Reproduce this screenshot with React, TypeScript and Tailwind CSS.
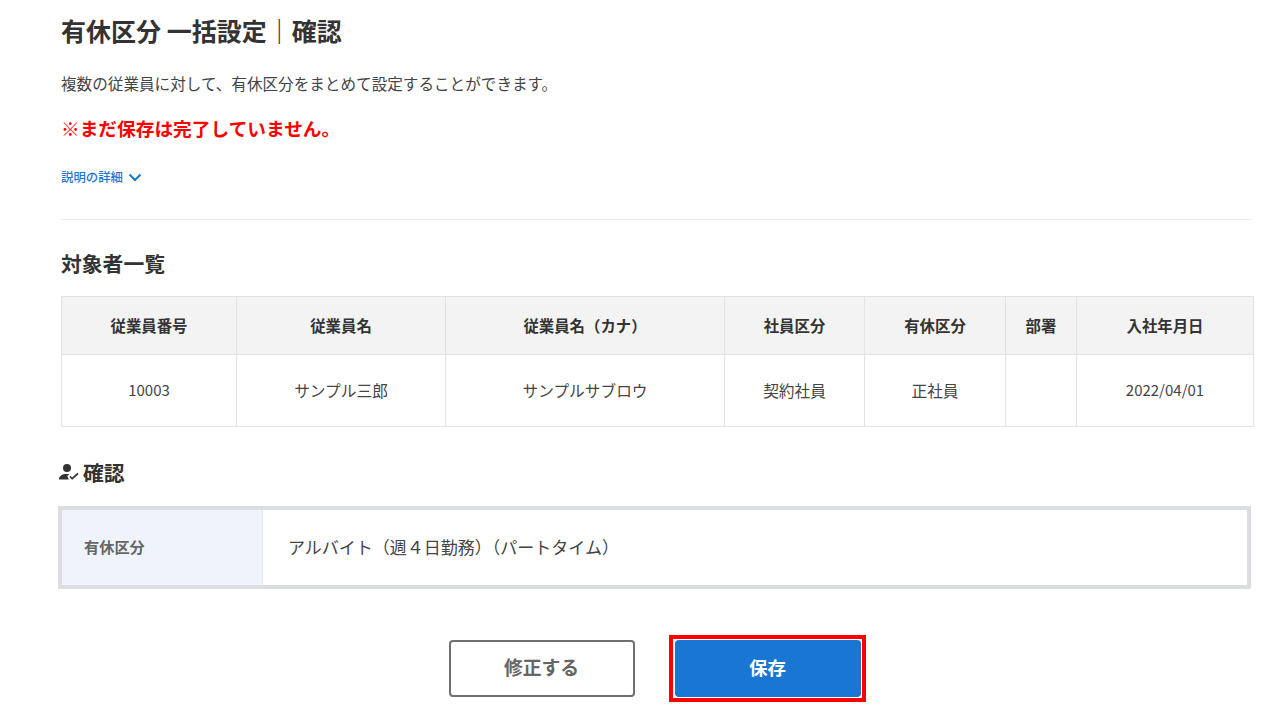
const font = "font-['Noto_Sans_CJK_JP','Noto_Sans',sans-serif]"

const headers = ["従業員番号", "従業員名", "従業員名（カナ）", "社員区分", "有休区分", "部署", "入社年月日"]
const cells = ["10003", "サンプル三郎", "サンプルサブロウ", "契約社員", "正社員", "", "2022/04/01"]
const widths = ["w-[175px]", "w-[209px]", "w-[279px]", "w-[140px]", "w-[141px]", "w-[71px]", "w-[177px]"]

export default function App() {
  return (
    <div className={`${font} w-[1280px] h-[717px] overflow-hidden bg-white text-[#333] pl-[61px] pr-[27px]`}>
      <h1 className="pt-[13px] text-[25px] leading-[34px] font-bold">有休区分 一括設定｜確認</h1>
      <p className="mt-[26px] text-[15.6px] leading-[20px] text-[#444]">複数の従業員に対して、有休区分をまとめて設定することができます。</p>
      <p className="mt-[21px] text-[18.7px] leading-[28px] font-bold text-[#ff0000]">※まだ保存は完了していません。</p>
      <div className="mt-[26px] flex items-center gap-[5px] text-[12.4px] leading-[18px] font-medium text-[#1976d2]">
        説明の詳細
        <svg width="14" height="9" viewBox="0 0 14 9" fill="none" stroke="#1976d2" strokeWidth="2"><path d="M1.5 1.5 7 7l5.5-5.5" /></svg>
      </div>
      <div className="mt-[33px] border-t border-[#eee]" />
      <h2 className="mt-[29px] text-[20.8px] leading-[28px] font-bold">対象者一覧</h2>
      <table className="mt-[19px] table-fixed border-collapse w-[1192px] text-[15px]">
        <thead>
          <tr className="h-[58px] bg-[#f3f3f3]">
            {headers.map((h, i) => (
              <th key={h} className={`${widths[i]} border border-[#e3e3e3] text-[15.4px] font-bold`}>{h}</th>
            ))}
          </tr>
        </thead>
        <tbody>
          <tr className="h-[72px] text-[#444]">
            {cells.map((c, i) => (
              <td key={i} className={`border border-[#e3e3e3] text-center ${i >= 1 && i <= 4 ? "text-[15.7px]" : ""}`}>{c}</td>
            ))}
          </tr>
        </tbody>
      </table>
      <h2 className="mt-[31px] -ml-[2px] flex items-center gap-[4px] text-[20.8px] leading-[28px] font-bold">
        <svg width="20" height="18" viewBox="0 0 20 18" fill="#333">
          <circle cx="8" cy="5" r="4" />
          <path d="M0 16.5c0-3.5 3-5.5 7.5-5.5 1 0 2 .1 2.8.3l-2 1.7 1.5 3.5z" />
          <path d="m11 13.5 2.2 2.2L19 10.5" fill="none" stroke="#333" strokeWidth="1.7" />
        </svg>
        確認
      </h2>
      <div className="mt-[20px] -ml-[3px] w-[1193px] h-[83px] border-[4px] border-[#dcdde1] flex">
        <div className="w-[201px] pb-[2px] bg-[#eff4fc] border-r border-[#e3e8f0] flex items-center pl-[22px] text-[15.2px] font-bold text-[#666]">有休区分</div>
        <div className="flex-1 pb-[2px] flex items-center pl-[25px] text-[17px] text-[#444]">アルバイト（週４日勤務）（パートタイム）</div>
      </div>
      <div className="mt-[46px] flex justify-center gap-[34px]">
        <button className="mt-[5px] h-[57px] w-[186px] pb-[2px] rounded-[4px] border-2 border-[#707070] bg-white text-[18.8px] font-bold text-[#666]">修正する</button>
        <div className="w-[197px] border-[4px] border-[#ff0000] p-px flex justify-end">
          <button className="block h-[57px] w-[186px] pb-[2px] rounded-[4px] bg-[#1976d2] text-[18.5px] font-bold text-white">保存</button>
        </div>
      </div>
    </div>
  )
}
